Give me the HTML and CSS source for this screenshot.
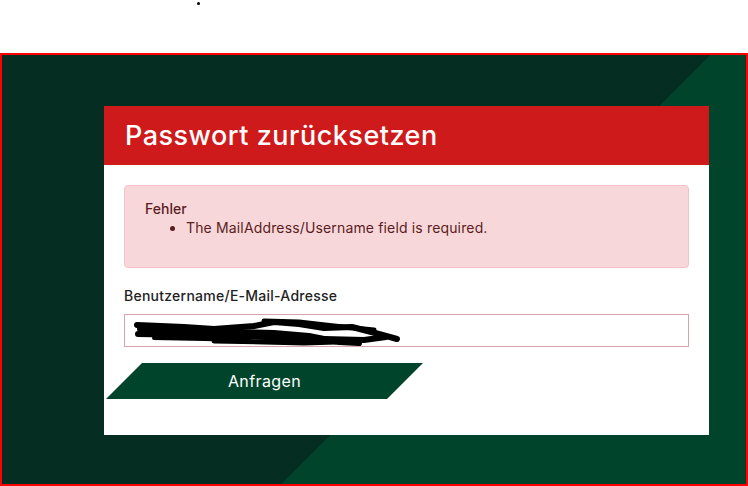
FILE: index.html
```html
<!DOCTYPE html>
<html lang="de">
<head>
    <meta charset="UTF-8">
    <meta name="viewport" content="width=device-width, initial-scale=1.0">
    <title>Passwort zurücksetzen</title>
    <link rel="stylesheet" href="styles.css">
</head>
<body>
    <ul class="top-nav">
        <li></li>
    </ul>

    <div class="stage">
        <div class="card">
            <h1 class="card-title">Passwort zurücksetzen</h1>
            <div class="card-body">
                <div class="alert">
                    <strong>Fehler</strong>
                    <ul>
                        <li>The MailAddress/Username field is required.</li>
                    </ul>
                </div>

                <label for="mail">Benutzername/E-Mail-Adresse</label>
                <div class="input-wrap">
                    <input type="text" id="mail" value="">
                    <!-- redacted value -->
                    <svg class="scribble" width="280" height="30" viewBox="0 0 280 30">
                        <g fill="none" stroke="#000" stroke-linecap="round" stroke-linejoin="round">
                            <polyline stroke-width="6" points="13,8 60,10 90,12 130,9 150,5 175,7 200,11 228,10 255,17 273,22"/>
                            <polyline stroke-width="6" points="14,17 70,18 120,19 160,21 200,22 240,23 262,20"/>
                            <polyline stroke-width="6" points="16,12 60,14 110,15 150,16 185,19 215,25 235,26"/>
                            <polyline stroke-width="5" points="140,4 175,5 210,9 250,13"/>
                            <polyline stroke-width="5" points="90,24 140,25 180,26 212,25"/>
                            <polyline stroke-width="4" points="30,21 80,22 125,23"/>
                        </g>
                    </svg>
                </div>

                <button class="btn" type="button"><span>Anfragen</span></button>
            </div>
        </div>
    </div>
</body>
</html>
```

FILE: styles.css
```css
body {
    margin: 0;
    font-family: Inter, "Noto Sans", sans-serif;
    color: #222;
}
.top-nav {
    margin: 0;
    padding: 2px 0 0 197px;
    height: 51px;
    list-style: none;
}
.top-nav li {
    width: 3px;
    height: 3px;
    border-radius: 50%;
    background-color: #000;
}
.stage {
    box-sizing: border-box;
    height: 433px;
    border: 2px solid #ff0000;
    background: linear-gradient(135deg, #062d22 60.4%, #00452b 60.4%);
    padding: 51px 37px 0 102px;
}
.card {
    width: 605px;
    height: 329px;
    background-color: #fff;
}
.card-title {
    margin: 0;
    height: 59px;
    padding: 0 21px;
    background-color: #cf1a1b;
    color: #fff;
    font-size: 27px;
    font-weight: 500;
    line-height: 59px;
    letter-spacing: 0.5px;
}
.card-body {
    padding: 20px 20px 0;
}
.alert {
    box-sizing: border-box;
    height: 83px;
    padding: 14px 20px 5px;
    border: 1px solid #f5c2c7;
    border-radius: 4px;
    background-color: #f8d7da;
    color: #5a1d22;
    font-size: 14px;
}
.alert strong {
    display: block;
    font-weight: 500;
    line-height: 18px;
}
.alert ul {
    margin: 0;
    padding-left: 41px;
    line-height: 20px;
    letter-spacing: 0.15px;
}
label {
    display: block;
    margin-top: 19px;
    font-size: 14px;
    font-weight: 500;
    line-height: 18px;
    letter-spacing: 0.25px;
}
.input-wrap {
    position: relative;
    margin-top: 9px;
}
input[type="text"] {
    display: block;
    width: 100%;
    height: 33px;
    box-sizing: border-box;
    border: 1px solid #d9a3ab;
    padding: 4px 10px;
    font-size: 14px;
}
.scribble {
    position: absolute;
    left: 0;
    top: 3px;
}
.btn {
    position: relative;
    display: block;
    width: 281px;
    height: 36px;
    margin-top: 16px;
    padding: 0;
    border: none;
    background: none;
    color: #fff;
    font-family: inherit;
    font-size: 16px;
    letter-spacing: 0.4px;
    cursor: pointer;
}
.btn::before {
    content: "";
    position: absolute;
    inset: 0;
    background-color: #00452b;
    transform: skewX(-45deg);
}
.btn span {
    position: relative;
}
```
